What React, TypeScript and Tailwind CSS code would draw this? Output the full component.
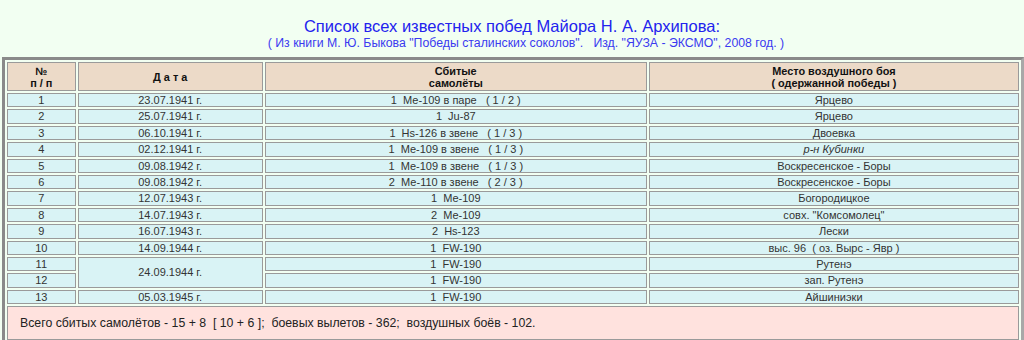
import React from 'react';

type Victory = {
  n: number;
  date?: string;
  span?: number;
  planes: string;
  place: string;
  italic?: boolean;
};

const victories: Victory[] = [
  { n: 1, date: '23.07.1941 г.', planes: '1  Ме-109 в паре   ( 1 / 2 )', place: 'Ярцево' },
  { n: 2, date: '25.07.1941 г.', planes: '1  Ju-87', place: 'Ярцево' },
  { n: 3, date: '06.10.1941 г.', planes: '1  Hs-126 в звене   ( 1 / 3 )', place: 'Двоевка' },
  { n: 4, date: '02.12.1941 г.', planes: '1  Ме-109 в звене   ( 1 / 3 )', place: 'р-н Кубинки', italic: true },
  { n: 5, date: '09.08.1942 г.', planes: '1  Ме-109 в звене   ( 1 / 3 )', place: 'Воскресенское - Боры' },
  { n: 6, date: '09.08.1942 г.', planes: '2  Ме-110 в звене   ( 2 / 3 )', place: 'Воскресенское - Боры' },
  { n: 7, date: '12.07.1943 г.', planes: '1  Ме-109', place: 'Богородицкое' },
  { n: 8, date: '14.07.1943 г.', planes: '2  Ме-109', place: 'совх. "Комсомолец"' },
  { n: 9, date: '16.07.1943 г.', planes: '2  Hs-123', place: 'Лески' },
  { n: 10, date: '14.09.1944 г.', planes: '1  FW-190', place: 'выс. 96  ( оз. Вырс - Явр )' },
  { n: 11, date: '24.09.1944 г.', span: 2, planes: '1  FW-190', place: 'Рутенэ' },
  { n: 12, planes: '1  FW-190', place: 'зап. Рутенэ' },
  { n: 13, date: '05.03.1945 г.', planes: '1  FW-190', place: 'Айшиниэки' },
];

const head = 'border border-[#9a9a9a] bg-[#ecdac8] px-1 py-[1.5px] text-center align-middle text-[10.9px] font-bold leading-[12px] text-[#111]';
const cell = 'border border-[#9a9a9a] bg-[#d9f3f5] p-0 text-center align-middle text-[11px] leading-[12.4px] text-[#333] whitespace-pre';

export default function App() {
  return (
    <div className="min-h-screen w-full overflow-hidden bg-[#f2fff2] font-['Liberation_Sans',Arial,sans-serif]">
      {/* Heading */}
      <div className="pt-[16px] text-center">
        <h1 className="text-[16.5px] leading-[20px] text-[#2323ee]">
          Список всех известных побед Майора Н. А. Архипова:
        </h1>
        <p className="pl-[28px] text-[12.3px] leading-[15px] text-[#3a3af0] whitespace-pre">
          ( Из книги М. Ю. Быкова "Победы сталинских соколов".   Изд. "ЯУЗА - ЭКСМО", 2008 год. )
        </p>
      </div>

      {/* Table */}
      <table className="ml-[2px] mt-[6px] table-fixed border-separate border-spacing-[2px] border-[3px] border-t-[#8a8a8a] border-l-[#8a8a8a] border-r-[#a8a8a8] border-b-[#3a3a3a] bg-[#f2fff2]">
        <colgroup>
          <col className="w-[69px]" />
          <col className="w-[186px]" />
          <col className="w-[384px]" />
          <col className="w-[372px]" />
        </colgroup>
        <thead>
          <tr>
            <th className={head}>№<br />п / п</th>
            <th className={head}>Д а т а</th>
            <th className={head}>Сбитые<br />самолёты</th>
            <th className={head}>Место воздушного боя<br />( одержанной победы )</th>
          </tr>
        </thead>
        <tbody>
          {victories.map((v) => (
            <tr key={v.n}>
              <td className={cell}>{v.n}</td>
              {v.date && (
                <td className={cell} rowSpan={v.span ?? 1}>{v.date}</td>
              )}
              <td className={cell}>{v.planes}</td>
              <td className={v.italic ? cell + ' italic' : cell}>{v.place}</td>
            </tr>
          ))}
          <tr>
            <td colSpan={4} className="border border-[#9a9a9a] bg-[#ffe2de] py-[8.5px] pl-[12px] text-left text-[12.3px] leading-[15px] text-[#222] whitespace-pre">
              Всего сбитых самолётов - 15 + 8  [ 10 + 6 ];  боевых вылетов - 362;  воздушных боёв - 102.
            </td>
          </tr>
        </tbody>
      </table>
    </div>
  );
}
